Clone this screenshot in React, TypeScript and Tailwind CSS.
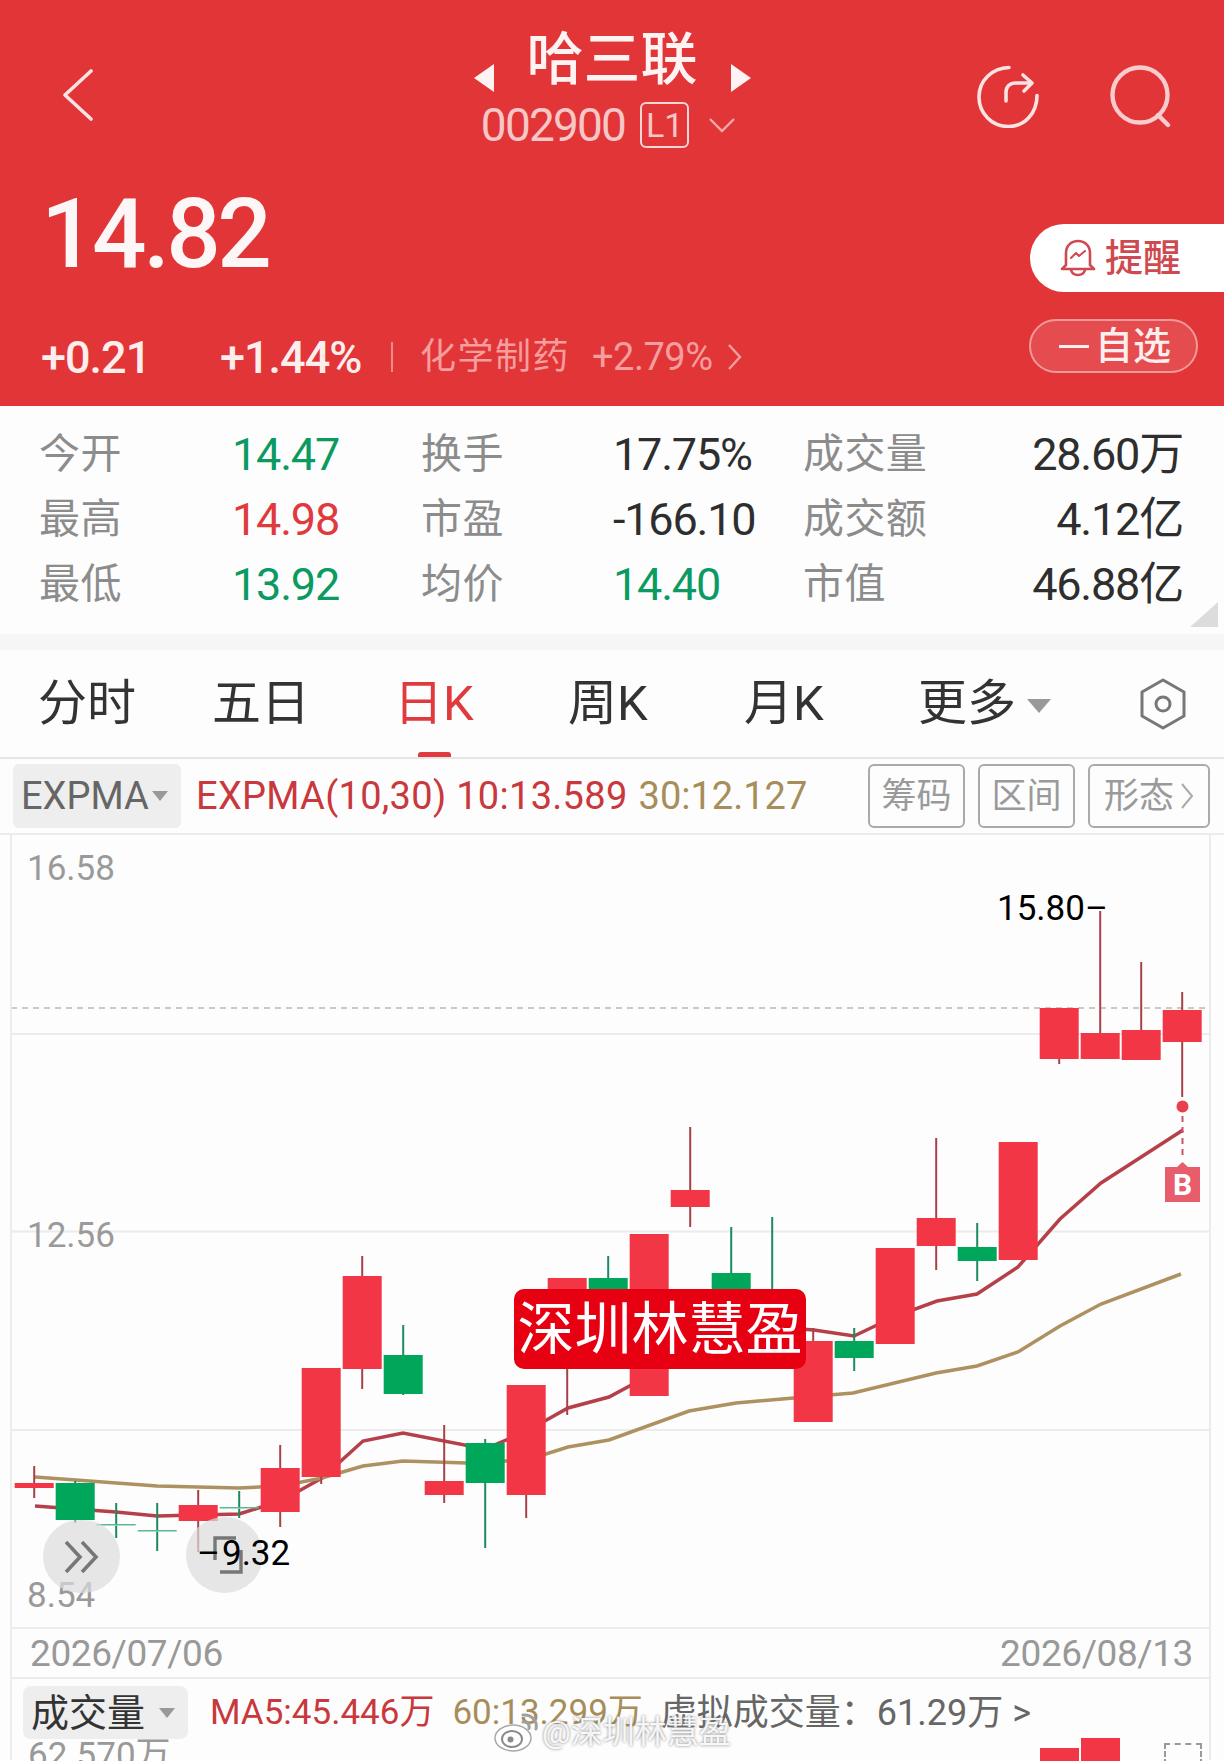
import React from 'react';

const RED = '#f23645';
const GREEN = '#00a65a';

// chart coordinates are page pixels, the svg viewBox starts at y=835
type Candle = { i: number; top: number; bottom: number; high?: number; low?: number; up: boolean };

const candles: Candle[] = [
  { i: 0, top: 1483, bottom: 1488, high: 1466, low: 1498, up: true },
  { i: 1, top: 1483, bottom: 1520, high: 1481, low: 1523, up: false },
  { i: 2, top: 1524, bottom: 1525.5, high: 1503, low: 1538, up: false },
  { i: 3, top: 1530, bottom: 1531.5, high: 1503, low: 1551, up: false },
  { i: 4, top: 1505, bottom: 1521, high: 1490, low: 1552, up: true },
  { i: 5, top: 1507, bottom: 1508.5, high: 1491, low: 1518, up: false },
  { i: 6, top: 1468, bottom: 1512, high: 1445, low: 1527, up: true },
  { i: 7, top: 1368, bottom: 1477, low: 1484, up: true },
  { i: 8, top: 1276, bottom: 1369, high: 1256, low: 1389, up: true },
  { i: 9, top: 1355, bottom: 1394, high: 1325, low: 1395, up: false },
  { i: 10, top: 1481, bottom: 1495, high: 1425, low: 1503, up: true },
  { i: 11, top: 1443, bottom: 1483, high: 1439, low: 1548, up: false },
  { i: 12, top: 1385, bottom: 1495, low: 1518, up: true },
  { i: 13, top: 1278, bottom: 1360, low: 1415, up: true },
  { i: 14, top: 1278, bottom: 1310, high: 1256, up: false },
  { i: 15, top: 1234, bottom: 1396, up: true },
  { i: 16, top: 1190, bottom: 1207, high: 1127, low: 1227, up: true },
  { i: 17, top: 1273, bottom: 1320, high: 1227, up: false },
  { i: 18, top: 1289, bottom: 1320, high: 1217, up: false },
  { i: 19, top: 1341, bottom: 1422, high: 1328, up: true },
  { i: 20, top: 1341, bottom: 1358, high: 1328, low: 1371, up: false },
  { i: 21, top: 1248, bottom: 1344, up: true },
  { i: 22, top: 1218, bottom: 1246, high: 1138, low: 1270, up: true },
  { i: 23, top: 1247, bottom: 1261, high: 1223, low: 1281, up: false },
  { i: 24, top: 1142, bottom: 1260, up: true },
  { i: 25, top: 1008, bottom: 1059, low: 1064, up: true },
  { i: 26, top: 1033, bottom: 1059, high: 911, up: true },
  { i: 27, top: 1030, bottom: 1060, high: 962, up: true },
  { i: 28, top: 1010, bottom: 1042, high: 992, low: 1097, up: true },
];

const redLine =
  '35,1506 116,1512 157,1516 239,1514 281,1501 322,1478 363,1441 403,1433 485,1449 527,1431 568,1408 609,1397 650,1375 691,1350 772,1327 814,1330 854,1336 896,1316 937,1301 977,1294 1018,1267 1060,1219 1101,1183 1183,1130';
const goldLine =
  '35,1477 157,1486 239,1488 281,1486 322,1478 363,1466 403,1461 467,1463 527,1460 568,1447 609,1440 689,1411 736,1403 782,1399 853,1393 936,1373 977,1366 1018,1352 1060,1326 1101,1304 1181,1274';

const centerX = (i: number) => 34.2 + 41 * i;

function Chart() {
  return (
    <svg className="block" width="1224" height="792" viewBox="0 835 1224 792">
      <line x1="11" y1="1008" x2="1210" y2="1008" stroke="#bdb9a8" strokeWidth="1.5" strokeDasharray="6 5" />
      {[1034, 1231.5, 1430].map((y) => (
        <line key={y} x1="11" y1={y} x2="1210" y2={y} stroke="#ececec" strokeWidth="2" />
      ))}
      <polyline points={redLine} fill="none" stroke="#b5404a" strokeWidth="3.5" />
      <polyline points={goldLine} fill="none" stroke="#ad9160" strokeWidth="3.5" />
      {candles.map((c) => {
        const x = centerX(c.i);
        const fill = c.up ? RED : GREEN;
        const wick = c.up ? '#a8404a' : '#1c8a5c';
        return (
          <g key={c.i}>
            {c.high !== undefined && <line x1={x} y1={c.high} x2={x} y2={c.top} stroke={wick} strokeWidth="2" />}
            {c.low !== undefined && <line x1={x} y1={c.bottom} x2={x} y2={c.low} stroke={wick} strokeWidth="2" />}
            <rect x={x - 19.5} y={c.top} width="39" height={c.bottom - c.top} fill={c.bottom - c.top < 3 ? '#5cb98f' : fill} />
          </g>
        );
      })}
      {/* buy marker */}
      <circle cx="1182.5" cy="1106.5" r="6" fill="#e8404c" />
      <line x1="1182.5" y1="1116" x2="1182.5" y2="1160" stroke="#c9566a" strokeWidth="2" strokeDasharray="6 5" />
      <path d="M1165 1167h12l5.5-5 5.5 5h12v35h-35z" fill="#e85d6c" />
    </svg>
  );
}

function RefreshIcon() {
  return (
    <svg width="63" height="63" viewBox="0 0 63 63" fill="none" stroke="#fbe3e3" strokeWidth="3.6" strokeLinecap="round" strokeLinejoin="round">
      <path d="M32 2.500C15 3 2 15.500 2 32c0 16.500 13 29.500 29.500 29.500S60 48 60 30.500" />
      <path d="M29 36V27c0-5.500 4-9 9-9h16" />
      <path d="M46 10l9 8-8 8" />
    </svg>
  );
}

function SearchIcon() {
  return (
    <svg width="62" height="63" viewBox="0 0 62 63" fill="none" stroke="#f8cccc" strokeWidth="4.4" strokeLinecap="round">
      <circle cx="30" cy="30" r="27.5" />
      <path d="M48 50l10 10" />
    </svg>
  );
}

function BellIcon() {
  return (
    <svg width="36" height="38" viewBox="0 0 36 38" fill="none" stroke="#cf4a50" strokeWidth="2.6" strokeLinecap="round" strokeLinejoin="round">
      <path d="M6 26V14C6 7 11 2 18 2s12 5 12 12v12l4 4H2z" />
      <path d="M11 31c1 3.500 4 5 7 5s6-1.500 7-5" />
      <path d="M11 19l5-5 3 3 6-5" strokeWidth="2" />
    </svg>
  );
}

function Tri({ className }: { className: string }) {
  return <div className={`w-0 h-0 border-x-[8px] border-x-transparent border-t-[10px] ${className}`} />;
}

function WeiboLogo() {
  return (
    <svg width="46" height="40" viewBox="0 0 46 40" fill="none">
      <ellipse cx="19" cy="26" rx="18" ry="13" fill="#ffffff" stroke="#a8a8a8" strokeWidth="1.5" />
      <ellipse cx="18" cy="27" rx="10" ry="8" fill="#ffffff" stroke="#8a8a8a" strokeWidth="2" />
      <circle cx="16.500" cy="27.500" r="3" fill="#8a8a8a" />
      <path d="M29 3c8-1 15 6 13 14M29 10c4-.5 7 2.500 6 6.500" stroke="#a0a0a0" strokeWidth="3" strokeLinecap="round" />
    </svg>
  );
}

const stats = [
  [
    ['今开', '14.47', 'text-[#0a9a62]'],
    ['换手', '17.75%', 'text-[#2e2e2e]'],
    ['成交量', '28.60万', 'text-[#2e2e2e]'],
  ],
  [
    ['最高', '14.98', 'text-[#e0393e]'],
    ['市盈', '-166.10', 'text-[#2e2e2e]'],
    ['成交额', '4.12亿', 'text-[#2e2e2e]'],
  ],
  [
    ['最低', '13.92', 'text-[#0a9a62]'],
    ['均价', '14.40', 'text-[#0a9a62]'],
    ['市值', '46.88亿', 'text-[#2e2e2e]'],
  ],
];

const tabs = [
  { label: '分时', w: 'w-[174px]' },
  { label: '五日', w: 'w-[182px]' },
  { label: '日K', w: 'w-[174px]', active: true },
  { label: '周K', w: 'w-[176px]' },
  { label: '月K', w: 'w-[174px]' },
];

export default function App() {
  return (
    <div className="relative w-[1224px] h-[1761px] overflow-hidden bg-[#fdfdfd] font-['Roboto','Noto_Sans_CJK_SC',sans-serif]">
      {/* Red quote header */}
      <header className="h-[406px] bg-[#e23538] pt-[30px] flex flex-col">
        <div className="grid grid-cols-[1fr_auto_1fr]">
          <div className="pl-[62px] pt-[39px]">
            <svg width="32" height="52" viewBox="0 0 32 52" fill="none" stroke="#fbe3e3" strokeWidth="3.6" strokeLinecap="round" strokeLinejoin="round">
              <path d="M29 2L3 26l26 24" />
            </svg>
          </div>
          <div className="flex flex-col items-center w-[290px]">
            <div className="flex items-start gap-[33px] h-[63px]">
              <svg className="mt-[34px]" width="20" height="28" viewBox="0 0 20 28"><path d="M20 0v28L0 14z" fill="#fdf3f3" /></svg>
              <span className="text-[57px] leading-[60px] font-medium text-[#fdf3f3]">哈三联</span>
              <svg className="mt-[34px]" width="20" height="28" viewBox="0 0 20 28"><path d="M0 0v28l20-14z" fill="#fdf3f3" /></svg>
            </div>
            <div className="flex items-center h-[46px] mt-[9px] -ml-[8px] text-[#f7c6c6]">
              <span className="text-[46px] leading-none tracking-[-1.8px]">002900</span>
              <span className="ml-[15px] w-[49px] h-[46px] rounded-[6px] border-2 border-[#f9d6d6] flex items-center justify-center text-[34px] leading-none">L1</span>
              <svg className="ml-[20px]" width="26" height="15" viewBox="0 0 26 15" fill="none" stroke="#f2a9a9" strokeWidth="2.4"><path d="M1 1l12 12L25 1" /></svg>
            </div>
          </div>
          <div className="flex justify-end gap-[70px] pr-[52px] pt-[35px] items-start">
            <RefreshIcon />
            <SearchIcon />
          </div>
        </div>

        <div className="flex justify-between pl-[41px] mt-[24px]">
          <div className="flex flex-col">
            <span className="text-[96px] leading-none font-medium tracking-[-3.5px] text-[#fdf6f6] mt-[14px]">14.82</span>
            <div className="flex items-center mt-[57px] h-[36px]">
              <span className="w-[179px] text-[45px] leading-none text-[#fdeeee] font-medium tracking-[-1px]">+0.21</span>
              <span className="w-[171px] text-[45px] leading-none text-[#fdeeee] font-medium tracking-[-1px]">+1.44%</span>
              <span className="w-[2px] h-[30px] bg-[#ee8c8c]" />
              <span className="ml-[27px] text-[36px] leading-none text-[#f59e9e] tracking-[1.5px]">化学制药</span>
              <span className="ml-[22px] text-[38px] leading-none text-[#f59e9e] tracking-[-0.5px]">+2.79%</span>
              <svg className="ml-[14px]" width="15" height="28" viewBox="0 0 15 28" fill="none" stroke="#f59e9e" strokeWidth="2.4"><path d="M2 2l11 12L2 26" /></svg>
            </div>
          </div>
          <div className="flex flex-col items-start w-[194px] pt-[52px]">
            <div className="w-[194px] h-[68px] bg-white rounded-l-[34px] flex items-center pl-[30px] gap-[9px]">
              <BellIcon />
              <span className="text-[38px] leading-none text-[#cf4a50] font-medium">提醒</span>
            </div>
            <div className="mt-[27px] -ml-[1px] w-[169px] h-[54px] rounded-full border-2 border-[#f29a9a] bg-[#e44c4f] flex items-center pl-[28px] gap-[6px]">
              <span className="w-[30px] h-[3px] bg-[#fdeeee]" />
              <span className="text-[38px] leading-none text-[#fdeeee] font-medium">自选</span>
            </div>
          </div>
        </div>
      </header>

      {/* Stats grid */}
      <section className="relative h-[228px] pt-[16px] pl-[39px] pr-[41px]">
        {stats.map((row, r) => (
          <div key={r} className="h-[65px] grid grid-cols-[193px_189px_192px_190px_130px_1fr] items-center">
            {row.map(([label, value, color], c) => (
              <React.Fragment key={label}>
                <span className="text-[41px] leading-none tracking-[0.4px] whitespace-nowrap text-[#8c8c8c]">{label}</span>
                <span className={`text-[45px] leading-none tracking-[-1.2px] whitespace-nowrap ${color} ${c === 2 ? 'text-right' : ''}`}>{value}</span>
              </React.Fragment>
            ))}
          </div>
        ))}
        <svg className="absolute right-[6px] bottom-[7px]" width="28" height="25" viewBox="0 0 28 25"><path d="M28 0v25H0z" fill="#dcdcdc" /></svg>
      </section>
      <div className="h-[16px] bg-[#f6f6f6]" />

      {/* Period tabs */}
      <nav className="relative h-[109px] border-b-2 border-[#e6e6e6] pl-[38px] flex items-center text-[49px] leading-none text-[#333333]">
        {tabs.map((t) => (
          <span key={t.label} className={`${t.w} relative ${t.active ? 'text-[#e0393e]' : ''}`}>{t.label}</span>
        ))}
        <span>更多</span>
        <Tri className="ml-[11px] mt-[4px] border-t-[#999999] border-x-[12px] border-t-[14px]" />
        <svg className="ml-auto mr-[37px]" width="48" height="52" viewBox="0 0 48 52" fill="none" stroke="#777777" strokeWidth="3">
          <path d="M24 2l21 12v24L24 50 3 38V14z" strokeLinejoin="round" />
          <circle cx="24" cy="26" r="7" />
        </svg>
        <span className="absolute left-[418px] bottom-0 w-[33px] h-[5px] rounded-t-[3px] bg-[#e0393e]" />
      </nav>

      {/* Indicator row */}
      <div className="h-[76px] pl-[13px] pr-[14px] flex items-center border-b-2 border-[#ececec]">
        <div className="w-[168px] h-[64px] rounded-[6px] bg-[#eeeeee] flex items-center pl-[8px] text-[#666666]">
          <span className="text-[38px] leading-none">EXPMA</span>
          <Tri className="ml-[3px] border-t-[#999999]" />
        </div>
        <span className="ml-[15px] text-[38px] leading-none tracking-[0.3px] text-[#c8383c]">EXPMA(10,30) 10:13.589</span>
        <span className="ml-[11px] text-[38px] leading-none text-[#a68d5a]">30:12.127</span>
        <div className="ml-auto flex gap-[13px] text-[35px] leading-none text-[#9a9a9a]">
          {['筹码', '区间'].map((b) => (
            <span key={b} className="w-[97px] h-[64px] rounded-[6px] border-2 border-[#aaaaaa] flex items-center justify-center">{b}</span>
          ))}
          <span className="w-[122px] h-[64px] rounded-[6px] border-2 border-[#aaaaaa] flex items-center justify-center gap-[7px]">
            形态
            <svg width="13" height="26" viewBox="0 0 13 26" fill="none" stroke="#aaaaaa" strokeWidth="2"><path d="M1 1l10 12L1 25" /></svg>
          </span>
        </div>
      </div>

      {/* K-line chart */}
      <div className="relative h-[792px]">
        <Chart />
        <span className="absolute left-[27px] top-[16px] text-[35px] leading-none text-[#9a9a9a]">16.58</span>
        <span className="absolute left-[27px] top-[383px] text-[35px] leading-none text-[#9a9a9a]">12.56</span>
        <span className="absolute left-[27px] top-[743px] text-[35px] leading-none text-[#9a9a9a]">8.54</span>
        <span className="absolute left-[997px] top-[56px] text-[35px] leading-none text-black">15.80–</span>
        <div className="absolute left-[43px] top-[685px] w-[77px] h-[73px] rounded-full bg-[#dcdcdc]/70 flex items-center justify-center">
          <svg width="36" height="34" viewBox="0 0 36 34" fill="none" stroke="#777777" strokeWidth="3.6">
            <path d="M2 2l14 15L2 32M18 2l14 15-14 15" />
          </svg>
        </div>
        <div className="absolute left-[186px] top-[682px] w-[77px] h-[76px] rounded-full bg-[#dcdcdc]/70 flex items-center justify-center">
          <svg width="36" height="38" viewBox="0 0 36 38" fill="none" stroke="#777777" strokeWidth="3.4">
            <path d="M8 24V2h21M34 14v22H13" />
          </svg>
        </div>
        <span className="absolute left-[197px] top-[701px] text-[35px] leading-none text-black">–<span className="ml-[2px]">9.32</span></span>
        <div className="absolute left-[514px] top-[454px] w-[292px] h-[80px] rounded-[10px] bg-[#e60012] flex items-center justify-center text-[57px] leading-none text-white">深圳林慧盈</div>
        <span className="absolute left-[1173px] top-[335px] text-[30px] leading-none font-bold text-white">B</span>
        <div className="absolute left-[10px] top-0 bottom-0 w-[2px] bg-[#ececec]" />
        <div className="absolute left-[1209px] top-0 bottom-0 w-[2px] bg-[#ececec]" />
      </div>

      {/* Date axis */}
      <div className="h-[52px] border-y-2 border-[#ececec] ml-[10px] mr-[13px] pl-[18px] pr-[16px] flex items-center justify-between text-[37px] leading-none tracking-[-0.4px] text-[#999999] border-x-2">
        <span>2026/07/06</span>
        <span>2026/08/13</span>
      </div>

      {/* Volume panel */}
      <div className="relative ml-[10px] mr-[13px] h-[81px] border-x-2 border-[#ececec]">
        <div className="flex items-center pt-[7px] pl-[11px]">
          <div className="w-[165px] h-[53px] rounded-[8px] bg-[#eeeeee] flex items-center pl-[8px] text-[38px] leading-none text-[#333333]">
            成交量
            <Tri className="ml-[14px] border-t-[#999999]" />
          </div>
          <span className="ml-[22px] text-[35px] leading-none text-[#c8383c]">MA5:45.446万</span>
          <span className="ml-[18px] text-[35px] leading-none text-[#a68d5a]">60:13.299万</span>
          <span className="ml-[18px] text-[36px] leading-none text-[#666666]">虚拟成交量：61.29万 &gt;</span>
        </div>
        <span className="block pl-[16px] text-[35px] leading-none text-[#999999] -mt-[1px]">62.570万</span>
        <div className="absolute left-[1028px] top-[69px] w-[39px] h-[20px] bg-[#f23645]" />
        <div className="absolute left-[1069px] top-[59px] w-[39px] h-[30px] bg-[#f23645]" />
        <div className="absolute left-[1152px] top-[64px] w-[38px] h-[30px] border-2 border-dashed border-[#999999]" />
      </div>

      {/* Weibo watermark */}
      <div className="absolute left-[494px] top-[1712px] flex items-center gap-[2px] text-[32px] leading-none text-white/90 [text-shadow:0_0_3px_#7a7a7a]">
        <WeiboLogo />
        <span>@深圳林慧盈</span>
      </div>
    </div>
  );
}
